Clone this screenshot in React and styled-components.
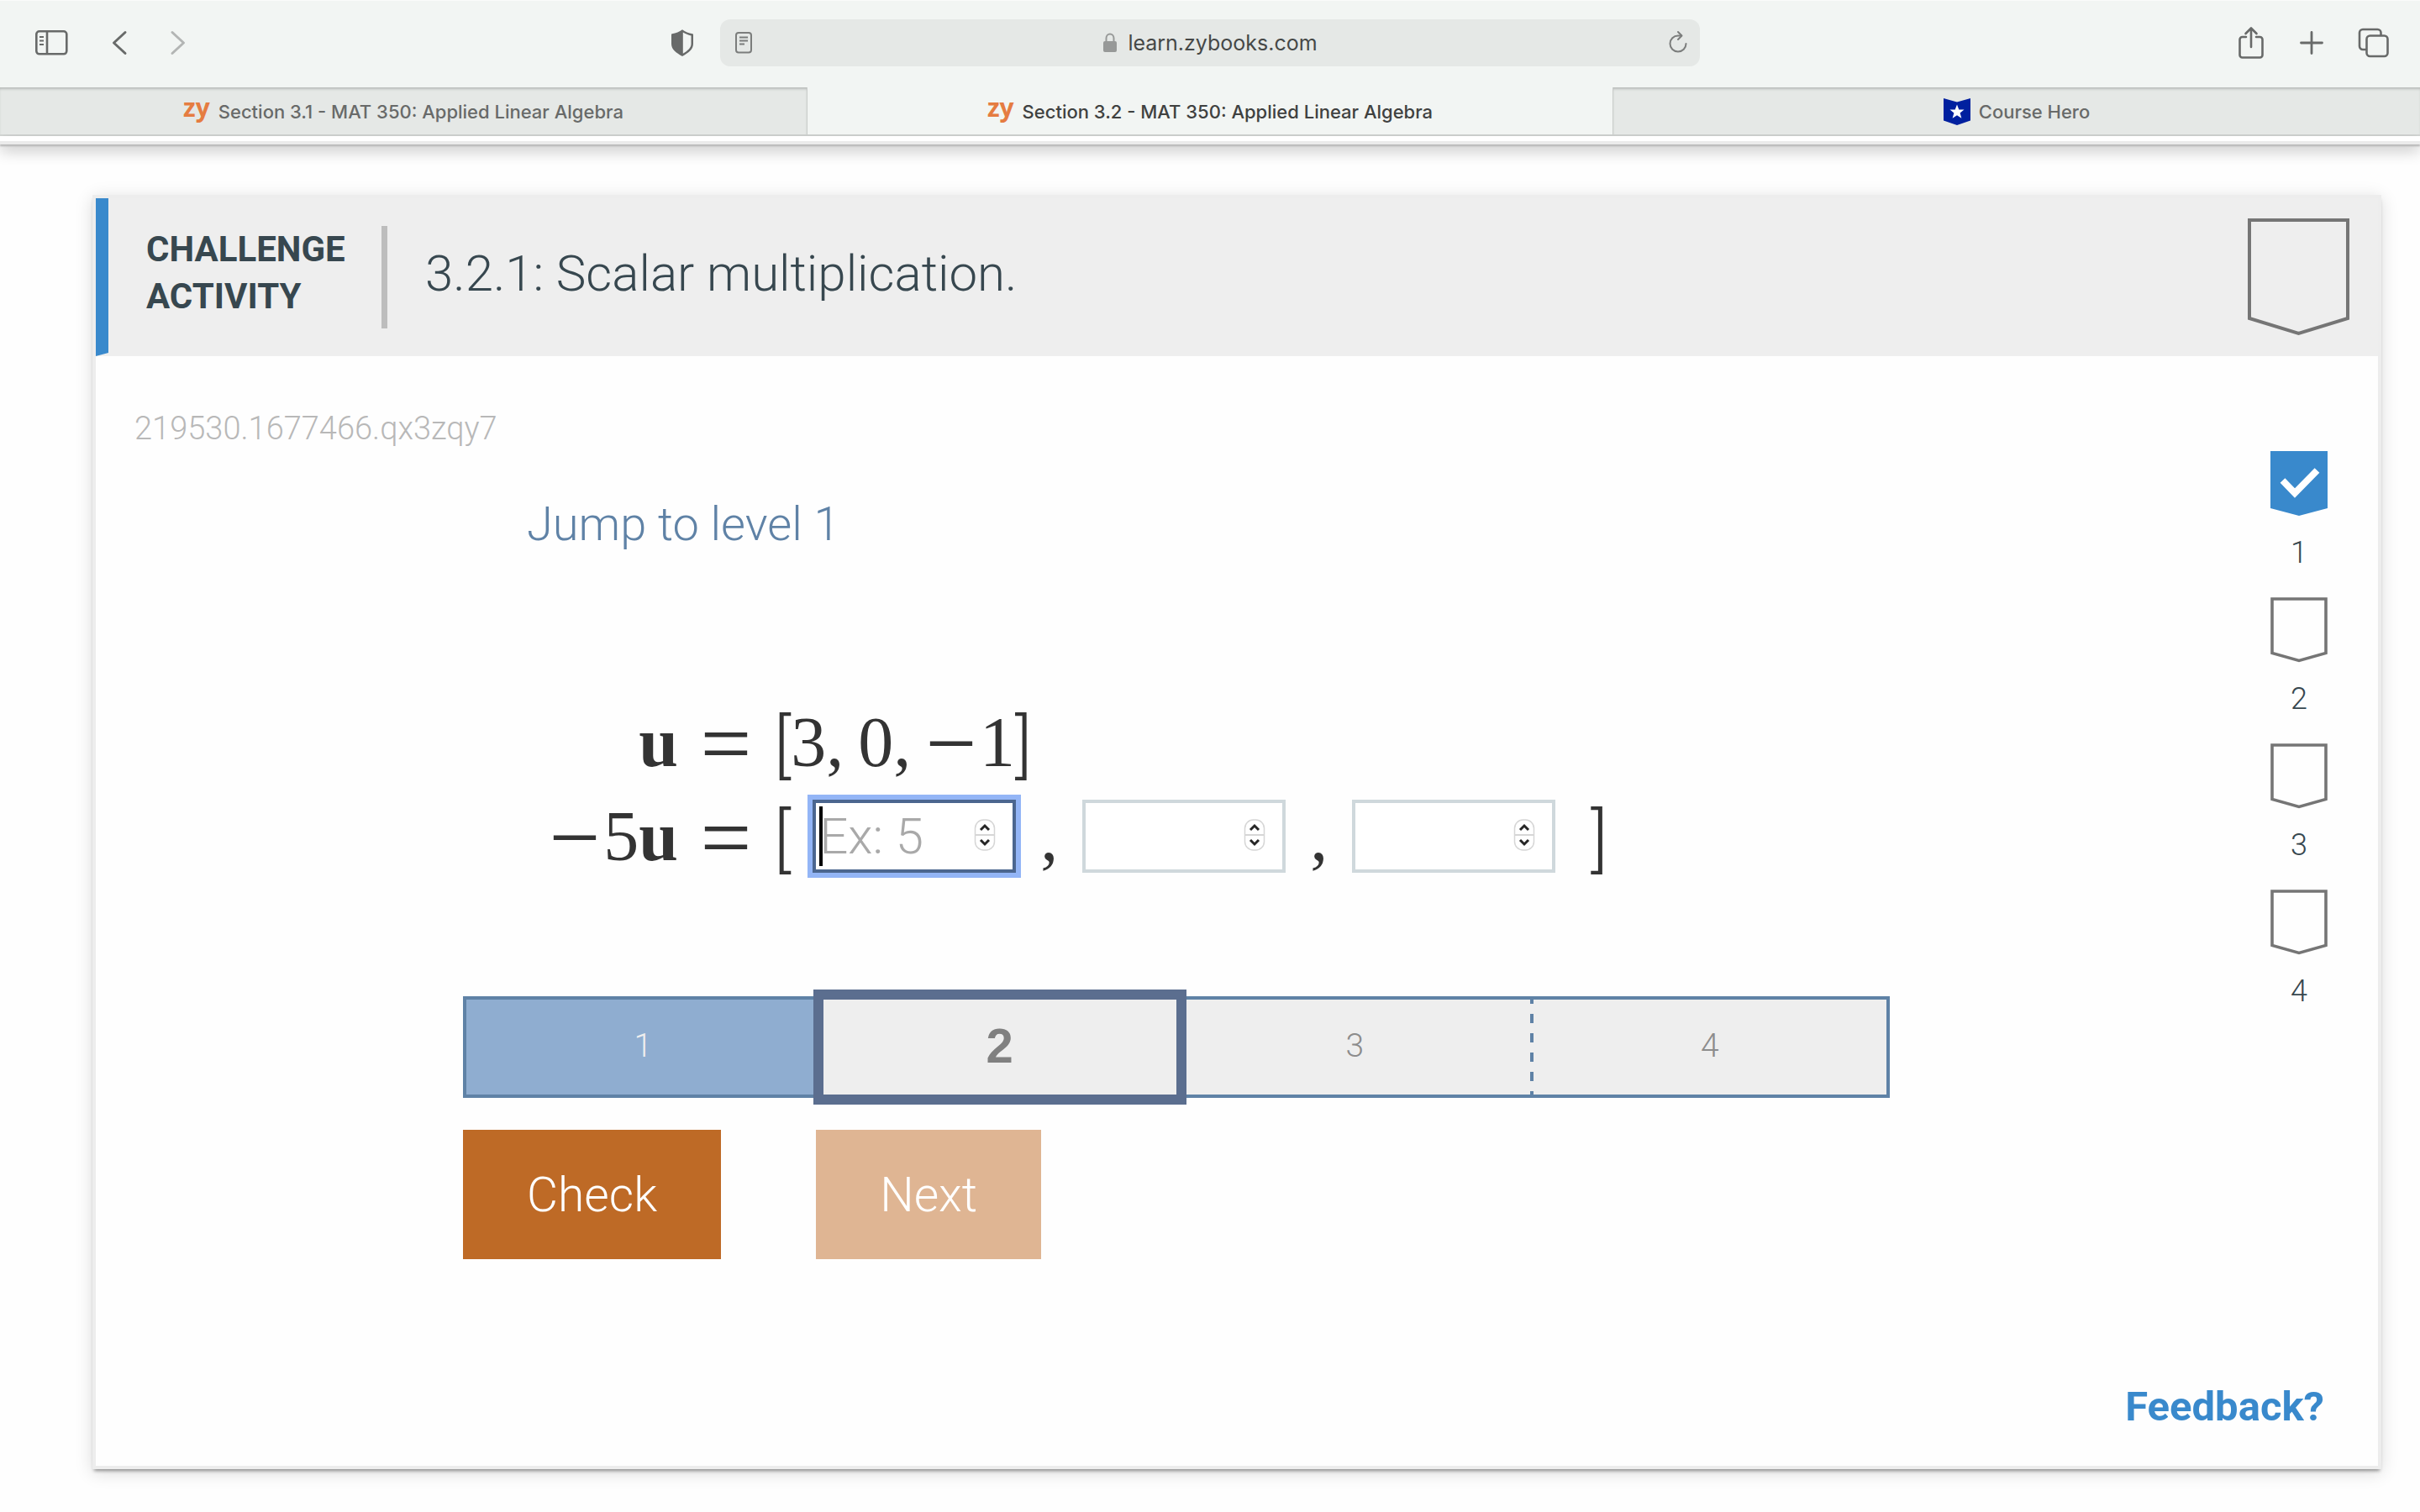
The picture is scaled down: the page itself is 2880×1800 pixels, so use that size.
import { useState } from 'react';
import styled, { createGlobalStyle, css } from 'styled-components';

const roboto = `Roboto, "Liberation Sans", sans-serif`;
const inter = `Inter, "Liberation Sans", sans-serif`;
const serif = `"Liberation Serif", "Times New Roman", serif`;

const GlobalStyle = createGlobalStyle`
  * {
    box-sizing: border-box;
  }

  body {
    margin: 0;
    background: #fefefe;
    font-family: ${roboto};
    color: #37474f;
  }

  button {
    font-family: inherit;
    border: none;
    background: none;
    padding: 0;
    cursor: pointer;
  }
`;

/* Browser chrome */

const Chrome = styled.header`
  background: #f2f5f3;
  border-top: 1px solid #fafbfa;
  font-family: ${inter};
`;

const Toolbar = styled.div`
  display: grid;
  grid-template-columns: 1fr 1166px 1fr;
  align-items: center;
  height: 103px;
  padding-bottom: 3px;
`;

const ToolGroup = styled.div`
  display: flex;
  align-items: center;
`;

const LeftTools = styled(ToolGroup)`
  padding: 0 30px 0 40px;
  gap: 50px;
`;

const RightTools = styled(ToolGroup)`
  justify-content: flex-end;
  padding-right: 36px;
  gap: 38px;
`;

const ToolButton = styled.button`
  display: flex;
  color: ${(props) => (props.$faded ? '#b3b5b4' : '#686a69')};
  margin-left: ${(props) => (props.$push ? 'auto' : '0')};
`;

const AddressBar = styled.div`
  display: flex;
  align-items: center;
  justify-content: space-between;
  height: 56px;
  padding: 0 12px 0 16px;
  border-radius: 12px;
  background: #e5e8e6;
`;

const Address = styled.div`
  display: flex;
  align-items: center;
  gap: 12px;
  font-size: 25px;
  line-height: 32px;
  color: #464847;
`;

const TabBar = styled.nav`
  display: grid;
  grid-template-columns: repeat(3, 1fr);
  height: 58px;
  border-bottom: 2px solid #d7dad8;
`;

const Tab = styled.a`
  display: flex;
  align-items: center;
  justify-content: center;
  gap: 10px;
  padding-top: 2px;
  font-size: 22px;
  line-height: 28px;
  font-weight: 500;
  text-decoration: none;
  color: #686a69;
  background: #e5e8e6;
  box-shadow: inset 0 3px 3px -1px #b7bab8;

  ${(props) =>
    props.$active &&
    css`
      color: #3f4140;
      background: #f2f5f3;
      border-left: 1px solid #c9ccca;
      border-right: 1px solid #c9ccca;
      box-shadow: none;
    `}
`;

const ZyMark = styled.span`
  font-family: "Open Sans", sans-serif;
  font-size: 30px;
  line-height: 28px;
  font-weight: 700;
  color: #e57c41;
  padding-bottom: 10px;
`;

const PageEdge = styled.div`
  height: 10px;
  background: #fff;
  border-bottom: 4px solid #ebebeb;
  box-shadow: 0 2px 2px #b4b4b4, 0 6px 18px rgba(0, 0, 0, 0.3);
`;

/* Activity card */

const Page = styled.main`
  padding: 60px 46px 52px 110px;
`;

const Card = styled.section`
  background: #fefefe;
  border: 4px solid #ededed;
  box-shadow: 0 4px 4px -2px rgba(0, 0, 0, 0.4), 0 4px 20px rgba(0, 0, 0, 0.14);
`;

const CardHeader = styled.div`
  display: flex;
  align-items: center;
  min-height: 188px;
  padding-right: 34px;
  background: #eeeeee;
`;

const Accent = styled.div`
  align-self: stretch;
  width: 15px;
  background: #3989cc;
  clip-path: polygon(0 0, 100% 0, 100% calc(100% - 4px), 0 100%);
`;

const Kind = styled.div`
  width: 332px;
  padding: 0 0 10px 45px;
  border-right: 7px solid #bdbdbd;
  font-size: 42px;
  line-height: 56px;
  font-weight: 700;
`;

const Title = styled.h1`
  flex: 1;
  margin: 0;
  padding: 0 0 8px 45px;
  font-size: 60px;
  line-height: 72px;
  font-weight: 300;
`;

const CardBody = styled.div`
  display: flex;
  padding: 60px 60px 0 46px;
`;

const Content = styled.div`
  flex: 1;
`;

const ActivityId = styled.div`
  font-size: 38px;
  line-height: 52px;
  font-weight: 300;
  color: #b8b8b8;
`;

const Exercise = styled.div`
  max-width: 2089px;
  padding-left: 391px;
`;

const JumpButton = styled.button`
  display: block;
  margin: 56px 0 0 76px;
  font-size: 56px;
  line-height: 64px;
  font-weight: 300;
  color: #5f82a6;
`;

const Equations = styled.div`
  margin: 172px 0 0 76px;
  font-family: ${serif};
  font-size: 84px;
  line-height: 112px;
  color: #333;
`;

const Equation = styled.div`
  display: flex;
  align-items: flex-start;
  height: 112px;
`;

const LeftSide = styled.div`
  width: 180px;
  text-align: right;
`;

const Equals = styled.div`
  width: 114px;
  text-align: center;
`;

/* Line height 0 keeps the larger signs from stretching the row */
const Sign = styled.span`
  font-size: 108px;
  line-height: 0;
  vertical-align: -9px;
`;

const Minus = styled(Sign)`
  margin-right: 4px;
`;

const Bracket = styled.span`
  font-family: ${roboto};
  font-size: 84px;
  line-height: 0;
  font-weight: 300;
  vertical-align: -4px;
`;

const Open = styled.div`
  padding-right: 26px;
`;

const Close = styled.div`
  padding-left: 42px;
`;

const Comma = styled.span`
  display: inline-block;
  width: 38px;
`;

const Separator = styled.div`
  width: 79px;
  text-align: center;
`;

const Field = styled.label`
  position: relative;
  display: block;
  margin-top: 12px;

  ${(props) =>
    props.$current &&
    css`
      &::before {
        content: '';
        position: absolute;
        left: 8px;
        top: 8px;
        width: 4px;
        height: 71px;
        background: #000;
      }
    `}
`;

const NumberInput = styled.input`
  display: block;
  width: 242px;
  height: 87px;
  padding: 0 70px 0 4px;
  border: 4px solid ${(props) => (props.$current ? '#4b668f' : '#cfd8dc')};
  border-radius: 0;
  outline: none;
  background: #fff;
  font-family: ${roboto};
  font-size: 60px;
  font-weight: 300;
  color: #37474f;
  box-shadow: ${(props) => (props.$current ? '0 0 0 6px #93b5f6' : 'none')};

  &::placeholder {
    color: #a9a9a9;
    opacity: 1;
  }
`;

const Stepper = styled.svg`
  position: absolute;
  right: 24px;
  top: 22px;
`;

const Progress = styled.ol`
  display: grid;
  grid-template-columns: repeat(4, 1fr);
  height: 121px;
  margin: 134px 0 0;
  padding: 0;
  list-style: none;
`;

const Step = styled.li`
  display: flex;
  align-items: center;
  justify-content: center;
  padding-bottom: 4px;
  background: #eee;
  border: 4px solid #5f82a6;
  border-width: 4px 0;
  font-size: 39px;
  font-weight: 300;
  color: #8c8c8c;

  &:first-child {
    border-left-width: 4px;
  }

  &:last-child {
    border-right-width: 4px;
  }

  ${(props) =>
    props.$done &&
    css`
      background: #8fadd0;
      color: #eee;
    `}

  ${(props) =>
    props.$dashed &&
    css`
      background: linear-gradient(#5f82a6 50%, #eee 50%) right -6px / 4px 23px repeat-y #eee;
    `}

  ${(props) =>
    props.$current &&
    css`
      z-index: 1;
      margin: -8px -12px -8px -8px;
      border: 12px solid #5b6e8f;
      font-family: "Liberation Sans", sans-serif;
      font-size: 58px;
      font-weight: 700;
      color: #808080;
    `}
`;

const Actions = styled.div`
  display: flex;
  gap: 113px;
  margin-top: 38px;
`;

const ActionButton = styled.button`
  height: 154px;
  padding: 0 76px;
  background: #be6a26;
  color: #fff;
  font-size: 57px;
  font-weight: 300;

  &:disabled {
    background: #dfb593;
    cursor: default;
  }
`;

const Levels = styled.ol`
  display: flex;
  flex-direction: column;
  gap: 29px;
  margin: 0;
  padding: 53px 0 0;
  list-style: none;
`;

const Level = styled.li`
  display: flex;
  flex-direction: column;
  align-items: center;
  gap: 19px;
  font-size: 36px;
  line-height: 48px;
  font-weight: 300;
`;

const CardFooter = styled.div`
  display: flex;
  justify-content: flex-end;
  padding: 146px 64px 40px;
`;

const Feedback = styled.a`
  font-size: 49px;
  line-height: 60px;
  font-weight: 700;
  color: #3989cc;
  text-decoration: none;
`;

function SidebarIcon() {
  return (
    <svg width="42" height="34" viewBox="0 0 42 34" fill="none" stroke="currentColor" strokeWidth="2.6">
      <rect x="3.3" y="3.3" width="36" height="27" rx="3.5" />
      <path d="M16 3v28" />
      <path d="M7 10h5M7 14.5h5M7 19h5" strokeWidth="2" />
    </svg>
  );
}

function ChevronIcon({ right }) {
  return (
    <svg width="20" height="32" viewBox="0 0 20 32" fill="none" stroke="currentColor" strokeWidth="3" strokeLinecap="round" strokeLinejoin="round">
      <path d={right ? 'M3 3.5 16.5 16 3 28.5' : 'M17 3.5 3.5 16 17 28.5'} />
    </svg>
  );
}

function ShieldIcon() {
  return (
    <svg width="30" height="34" viewBox="0 0 30 34">
      <path d="M15 1.200c3.500 2.600 7.500 4.200 12.200 5.100.5.100.8.500.8 1v11c0 6.500-5.500 10.500-13 14.700C7.500 28.800 2 24.800 2 18.300v-11c0-.5.300-.9.800-1C7.500 5.400 11.500 3.800 15 1.200z" fill="currentColor" />
      <path d="M15.800 4.500c3 1.900 6 3.100 9.700 3.900v9.900c0 4.900-4 8-9.700 11.500z" fill="#f2f5f3" />
    </svg>
  );
}

function ReaderIcon() {
  return (
    <svg width="24" height="28" viewBox="0 0 24 28" fill="none" stroke="#7b7d7c" strokeWidth="2">
      <rect x="3" y="2" width="18" height="23.5" rx="3" />
      <path d="M7 7.500h10M7 11.500h10M7 15.500h6" />
    </svg>
  );
}

function LockIcon() {
  return (
    <svg width="18" height="24" viewBox="0 0 18 24">
      <path d="M4.500 11V6.500a4.500 5 0 0 1 9 0V11" fill="none" stroke="#979998" strokeWidth="2" />
      <rect x="1" y="10" width="16" height="13" rx="2" fill="#979998" />
    </svg>
  );
}

function ReloadIcon() {
  return (
    <svg width="28" height="30" viewBox="0 0 28 30" fill="none" stroke="#7b7d7c" strokeWidth="2" strokeLinecap="round" strokeLinejoin="round">
      <path d="M23.500 16A9.500 9.500 0 1 1 14 6.500h4" />
      <path d="M14 2l4.500 4.500L14 11" />
    </svg>
  );
}

function ShareIcon() {
  return (
    <svg width="34" height="42" viewBox="0 0 34 42" fill="none" stroke="currentColor" strokeWidth="2.6" strokeLinecap="round" strokeLinejoin="round">
      <path d="M11 14H6.500a3 3 0 0 0-3 3v18.500a3 3 0 0 0 3 3h21a3 3 0 0 0 3-3V17a3 3 0 0 0-3-3H23" />
      <path d="M17 26V4M10.500 10 17 3.500 23.500 10" />
    </svg>
  );
}

function PlusIcon() {
  return (
    <svg width="34" height="34" viewBox="0 0 34 34" fill="none" stroke="currentColor" strokeWidth="2.8" strokeLinecap="round">
      <path d="M17 4.500v25M4.500 17h25" />
    </svg>
  );
}

function TabsIcon() {
  return (
    <svg width="38" height="38" viewBox="0 0 38 38" fill="none" stroke="currentColor" strokeWidth="2.6">
      <path d="M10 27H6a4 4 0 0 1-4-4V7a4 4 0 0 1 4-4h17.500a4 4 0 0 1 4 4v3.500" />
      <rect x="10.5" y="10.5" width="25" height="24.5" rx="4" />
    </svg>
  );
}

function CourseHeroIcon() {
  return (
    <svg width="32" height="32" viewBox="0 0 32 32">
      <path d="M0 0 16 4.500 32 0v26.500L16 32 0 26.500z" fill="#00209f" />
      <path d="M16 7.500l2.300 6h6.200l-4.900 4 1.800 6.300L16 20.200l-5.400 3.600 1.800-6.300-4.900-4h6.200z" fill="#fff" />
    </svg>
  );
}

function HeaderRibbon() {
  return (
    <svg width="121" height="140" viewBox="0 0 121 140" fill="none" stroke="#757575" strokeWidth="4">
      <path d="M2 2h117v117L60.500 137 2 119z" />
    </svg>
  );
}

function LevelRibbon({ done }) {
  return (
    <svg width="68" height="78" viewBox="0 0 68 78" fill="none">
      {done ? (
        <>
          <path d="M0 0h68v68L34 77 0 68z" fill="#3989cc" />
          <path d="M14.500 35 29 50 55.500 23" stroke="#fff" strokeWidth="8" />
        </>
      ) : (
        <path d="M2 2h64v64.500L34 75.500 2 66.500z" stroke="#757575" strokeWidth="3.6" />
      )}
    </svg>
  );
}

function StepperIcon() {
  return (
    <Stepper width="26" height="40" viewBox="0 0 26 40" aria-hidden="true">
      <rect x="1.5" y="2" width="23" height="36" rx="10" fill="#fff" stroke="#d6d6d6" strokeWidth="1.5" />
      <path d="M2 20h22" stroke="#d6d6d6" strokeWidth="2" />
      <path d="M8 14l5-5 5 5M8 26l5 5 5-5" fill="none" stroke="#262626" strokeWidth="3" />
    </Stepper>
  );
}

function ComponentField({ label, current, placeholder }) {
  const [value, setValue] = useState('');

  return (
    <Field $current={current}>
      <NumberInput
        $current={current}
        inputMode="numeric"
        aria-label={label}
        placeholder={placeholder}
        value={value}
        onChange={(e) => setValue(e.target.value)}
      />
      <StepperIcon />
    </Field>
  );
}

function App() {
  return (
    <>
      <GlobalStyle />
      <Chrome>
        <Toolbar>
          <LeftTools>
            <ToolButton aria-label="Show sidebar"><SidebarIcon /></ToolButton>
            <ToolButton aria-label="Back"><ChevronIcon /></ToolButton>
            <ToolButton aria-label="Forward" $faded><ChevronIcon right /></ToolButton>
            <ToolButton aria-label="Privacy report" $push><ShieldIcon /></ToolButton>
          </LeftTools>
          <AddressBar>
            <ToolButton aria-label="Reader"><ReaderIcon /></ToolButton>
            <Address>
              <LockIcon />
              learn.zybooks.com
            </Address>
            <ToolButton aria-label="Reload"><ReloadIcon /></ToolButton>
          </AddressBar>
          <RightTools>
            <ToolButton aria-label="Share"><ShareIcon /></ToolButton>
            <ToolButton aria-label="New tab"><PlusIcon /></ToolButton>
            <ToolButton aria-label="Tab overview"><TabsIcon /></ToolButton>
          </RightTools>
        </Toolbar>
        <TabBar>
          <Tab href="#section-3-1">
            <ZyMark>zy</ZyMark>
            Section 3.1 - MAT 350: Applied Linear Algebra
          </Tab>
          <Tab href="#section-3-2" $active>
            <ZyMark>zy</ZyMark>
            Section 3.2 - MAT 350: Applied Linear Algebra
          </Tab>
          <Tab href="#course-hero">
            <CourseHeroIcon />
            Course Hero
          </Tab>
        </TabBar>
      </Chrome>
      <PageEdge />

      <Page>
        <Card>
          <CardHeader>
            <Accent />
            <Kind>
              CHALLENGE
              <br />
              ACTIVITY
            </Kind>
            <Title>3.2.1: Scalar multiplication.</Title>
            <HeaderRibbon />
          </CardHeader>

          <CardBody>
            <Content>
              <ActivityId>219530.1677466.qx3zqy7</ActivityId>
              <Exercise>
                <JumpButton>Jump to level 1</JumpButton>

                <Equations>
                  <Equation>
                    <LeftSide><b>u</b></LeftSide>
                    <Equals><Sign>=</Sign></Equals>
                    <div>
                      <Bracket>[</Bracket>
                      3<Comma>,</Comma>0<Comma>,</Comma>
                      <Minus>−</Minus>1
                      <Bracket>]</Bracket>
                    </div>
                  </Equation>
                  <Equation>
                    <LeftSide><Minus>−</Minus>5<b>u</b></LeftSide>
                    <Equals><Sign>=</Sign></Equals>
                    <Open><Bracket>[</Bracket></Open>
                    <ComponentField label="First component" placeholder="Ex: 5" current />
                    <Separator>,</Separator>
                    <ComponentField label="Second component" />
                    <Separator>,</Separator>
                    <ComponentField label="Third component" />
                    <Close><Bracket>]</Bracket></Close>
                  </Equation>
                </Equations>

                <Progress>
                  <Step $done>1</Step>
                  <Step $current>2</Step>
                  <Step $dashed>3</Step>
                  <Step>4</Step>
                </Progress>

                <Actions>
                  <ActionButton>Check</ActionButton>
                  <ActionButton disabled>Next</ActionButton>
                </Actions>
              </Exercise>
            </Content>

            <Levels>
              {[1, 2, 3, 4].map((level) => (
                <Level key={level}>
                  <LevelRibbon done={level === 1} />
                  {level}
                </Level>
              ))}
            </Levels>
          </CardBody>

          <CardFooter>
            <Feedback href="#feedback">Feedback?</Feedback>
          </CardFooter>
        </Card>
      </Page>
    </>
  );
}

export default App;
